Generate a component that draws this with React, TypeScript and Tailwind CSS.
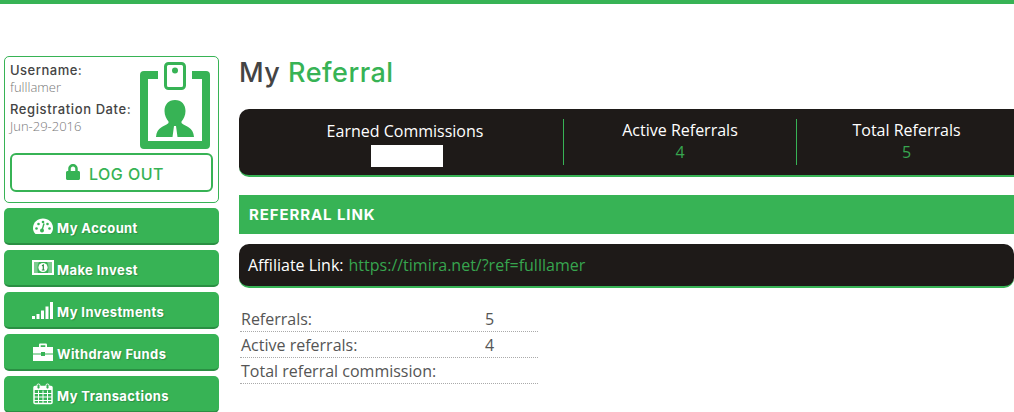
import { FaLock } from 'react-icons/fa'

const heading = 'font-["Inter","Liberation_Sans",sans-serif]'

function GaugeIcon() {
  return (
    <svg width="22" height="20" viewBox="0 0 22 20" className="overflow-visible">
      <path d="M3.500 17C1.800 15.400 1 13.400 1 11 1 5.500 5.500 1.500 11 1.500S21 5.500 21 11c0 2.400-.8 4.400-2.500 6z" fill="#fff" />
      <g fill="#37b355">
        <circle cx="4.500" cy="11.500" r="1.300" />
        <circle cx="6.500" cy="7" r="1.300" />
        <circle cx="11" cy="5" r="1.300" />
        <circle cx="15.500" cy="7" r="1.300" />
        <circle cx="17.500" cy="11.500" r="1.300" />
        <circle cx="10" cy="13.500" r="2" />
      </g>
      <path d="M10 13.500l2-7" stroke="#37b355" strokeWidth="1.400" />
    </svg>
  )
}

function MoneyIcon() {
  return (
    <svg width="22" height="20" viewBox="0 -1 22 20" className="overflow-visible">
      <rect x="1" y="1" width="20" height="13" fill="none" stroke="#fff" strokeWidth="2" />
      <path d="M2 2h5C5.500 4 5 9 6 13H2zM20 2h-5c1.500 2 2 7 1 11h4z" fill="#fff" fillOpacity="0.35" />
      <circle cx="11" cy="7.500" r="4.600" fill="#fff" />
      <path d="M10 5.800l1.300-.8v5M9.800 10h2.800" fill="none" stroke="#2a8f43" strokeWidth="1.200" />
    </svg>
  )
}

function SignalIcon() {
  return (
    <svg width="22" height="20" viewBox="0 0 22 20" className="overflow-visible">
      <g fill="#fff">
        <rect x="0" y="15" width="3" height="3" />
        <rect x="4.500" y="13" width="3" height="5" />
        <rect x="9" y="9.500" width="3" height="8.500" />
        <rect x="13.500" y="5.500" width="3" height="12.500" />
        <rect x="18" y="1" width="3" height="17" />
      </g>
    </svg>
  )
}

function BriefcaseIcon() {
  return (
    <svg width="22" height="20" viewBox="0 1 22 20" className="overflow-visible">
      <path d="M7 5V2.800C7 2 7.600 1.500 8.400 1.500h5.200c.8 0 1.400.5 1.400 1.300V5h-1.700V3.200H8.700V5z" fill="#fff" />
      <path d="M1 5h20v6.500H13v-1.500H9v1.500H1z" fill="#fff" />
      <path d="M1 12.500h8V14h4v-1.500h8V19H1z" fill="#fff" />
    </svg>
  )
}

function CalendarIcon() {
  return (
    <svg width="22" height="20" viewBox="0 1.500 22 20" className="overflow-visible">
      <rect x="2" y="3" width="18" height="17" rx="1" fill="none" stroke="#fff" strokeWidth="1.500" />
      <rect x="2" y="3" width="18" height="3.500" fill="#fff" />
      <path d="M2 10h18M2 13.500h18M2 17h18M6.500 7v13M11 7v13M15.500 7v13" stroke="#fff" strokeWidth="1" />
      <rect x="5" y="0.500" width="3" height="5" rx="1.400" fill="#37b355" stroke="#fff" strokeWidth="1" />
      <rect x="14" y="0.500" width="3" height="5" rx="1.400" fill="#37b355" stroke="#fff" strokeWidth="1" />
    </svg>
  )
}

const menu = [
  { label: 'My Account', Icon: GaugeIcon },
  { label: 'Make Invest', Icon: MoneyIcon },
  { label: 'My Investments', Icon: SignalIcon },
  { label: 'Withdraw Funds', Icon: BriefcaseIcon },
  { label: 'My Transactions', Icon: CalendarIcon },
]

function BadgeIcon() {
  return (
    <svg width="70" height="88" viewBox="0 0 70 88" fill="none" className="shrink-0">
      <path d="M18 13H4v70h62V13H52" stroke="#37b355" strokeWidth="8" strokeLinejoin="round" />
      <rect x="25.500" y="1.500" width="19" height="25" rx="3" fill="#fff" stroke="#37b355" strokeWidth="3" />
      <circle cx="35" cy="8.500" r="3" fill="#37b355" />
      <path d="M35 38c6.500 0 10.500 4.500 10.500 11 0 4.500-2 8-4 10.500V61c3.500 3.500 12 4 12.500 14H37.500L36 64h-2l-1.500 11H16c.5-10 9-10.500 12.500-14v-1.500c-2-2.500-4-6-4-10.500 0-6.500 4-11 10.500-11z" fill="#37b355" />
    </svg>
  )
}

function StatColumn({ title, value, width }: { title: string; value: string; width: string }) {
  return (
    <div className={`${width} flex flex-col items-center h-[46px] border-l border-[#37b355]`}>
      <div className="text-[16px] leading-[22px] text-white">{title}</div>
      <div className="text-[16px] leading-[22px] text-[#37a54f]">{value}</div>
    </div>
  )
}

function ReferralRow({ label, value }: { label: string; value?: string }) {
  return (
    <div className="flex h-[26px] items-end border-b border-dotted border-[#aaa] leading-[24px]">
      <span className="w-[245px] pl-px">{label}</span>
      {value && <span>{value}</span>}
    </div>
  )
}

export default function App() {
  return (
    <div className='w-[1014px] h-[412px] overflow-hidden bg-white font-["Open_Sans",sans-serif]'>
      <div className="h-[4px] bg-[#37b355]" />
      <div className="flex pt-[52px] pl-[4px] gap-[20px]">
        {/* Sidebar */}
        <aside className="w-[215px] shrink-0 flex flex-col">
          <div className="h-[147px] border border-[#37b355] rounded-[5px] px-[5px] pt-[5px]">
            <div className="flex justify-between h-[90px] pr-[3px]">
              <div className={`${heading} text-[13px]`}>
                <div className="leading-[17px] font-medium tracking-[0.5px] text-[#444]">Username:</div>
                <div className='font-["Open_Sans",sans-serif] font-light leading-[17px] text-[#777]'>fulllamer</div>
                <div className="mt-[5px] leading-[17px] font-medium tracking-[0.6px] text-[#444]">Registration Date:</div>
                <div className='font-["Open_Sans",sans-serif] font-light leading-[17px] text-[#777]'>Jun-29-2016</div>
              </div>
              <BadgeIcon />
            </div>
            <button className={`${heading} mt-[1px] w-[203px] h-[39px] pl-[6px] border-2 border-[#37b355] rounded-[6px] flex items-center justify-center gap-[8px] text-[#37b355] text-[16px] font-medium tracking-[0.5px]`}>
              <FaLock size={16} className="-mt-[2px]" />
              <span className="pt-[3px]">LOG OUT</span>
            </button>
          </div>

          <nav className="mt-[5px] flex flex-col gap-[5px]">
            {menu.map(({ label, Icon }) => (
              <a key={label} className={`${heading} h-[37px] rounded-[5px] bg-[#37b355] border-b-2 border-[#2a8f43] flex items-center pl-[28px] gap-[3px] text-white text-[13px] font-bold tracking-[0.4px] [text-shadow:1px_1px_1px_rgba(0,0,0,0.2)]`}>
                <span className="shrink-0 mt-[2px]"><Icon /></span>
                <span className="pt-[6px]">{label}</span>
              </a>
            ))}
          </nav>
        </aside>

        {/* Main */}
        <main className="flex-1 min-w-0">
          <h1 className={`${heading} text-[27px] leading-[34px] font-medium tracking-[0.5px] text-[#444]`}>
            My <span className="text-[#37b355]">Referral</span>
          </h1>

          <div className="mt-[19px] w-[790px] h-[68px] rounded-[10px] bg-[#1e1a18] border-b-2 border-[#37b355] flex pt-[10px]">
            <div className="w-[324px] flex flex-col items-center pl-[8px]">
              <div className="text-[16px] leading-[22px] text-white pt-[1px]">Earned Commissions</div>
              <div className="mt-[3px] ml-[4px] w-[72px] h-[22px] bg-white" />
            </div>
            <StatColumn title="Active Referrals" value="4" width="w-[233px]" />
            <StatColumn title="Total Referrals" value="5" width="w-[220px]" />
          </div>

          <div className={`${heading} mt-[18px] h-[39px] bg-[#37b355] flex items-center pl-[10px] pt-[2px] text-white text-[15px] font-bold tracking-[0.9px]`}>
            REFERRAL LINK
          </div>

          <div className="mt-[10px] h-[44px] rounded-[10px] bg-[#1e1a18] border-b-2 border-[#37b355] flex items-center pl-[9px] text-[16px]">
            <span className="text-white">Affiliate Link:</span>
            <span className="ml-[5px] text-[#37a54f]">https://timira.net/?ref=fulllamer</span>
          </div>

          <div className="mt-[18px] w-[299px] pl-[1px] text-[16px] text-[#555]">
            <ReferralRow label="Referrals:" value="5" />
            <ReferralRow label="Active referrals:" value="4" />
            <ReferralRow label="Total referral commission:" />
          </div>
        </main>
      </div>
    </div>
  )
}
